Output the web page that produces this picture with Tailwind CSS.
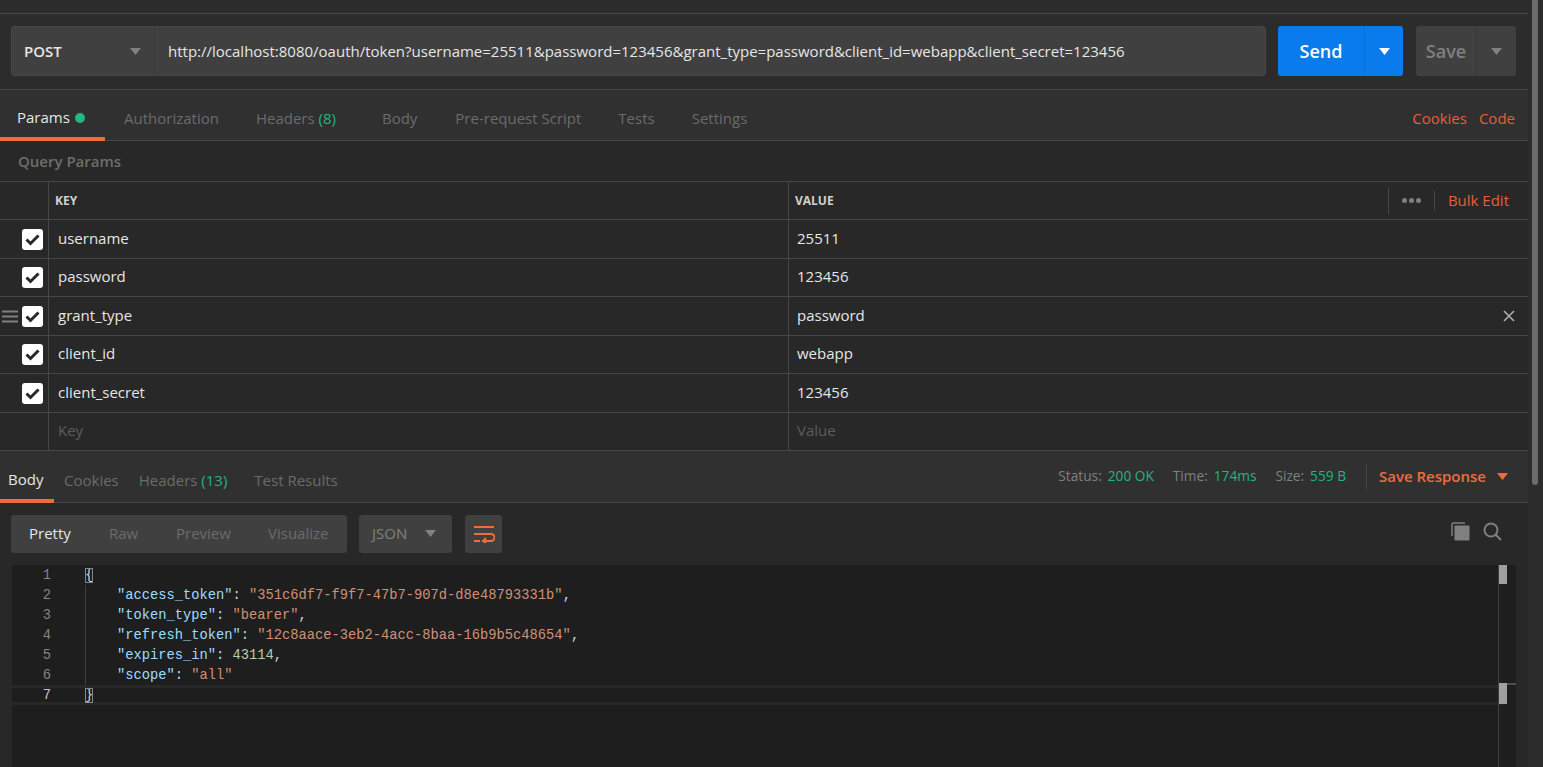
<!DOCTYPE html>
<html lang="en">
  <head>
    <meta charset="UTF-8" />
    <title>Postman</title>
    <script src="https://cdn.jsdelivr.net/npm/@tailwindcss/browser@4"></script>
  </head>
  <body class="bg-[#282828] font-['Open_Sans',sans-serif] overflow-hidden">
    <div class="flex h-[767px] w-[1543px]">
      <div class="w-[1528px] flex flex-col">
        <!-- top strip -->
        <div class="h-[14px] bg-[#2c2c2c] border-b border-[#464646]"></div>

        <!-- request bar -->
        <div class="h-[76px] bg-[#2c2c2c] border-b border-[#464646] flex items-start pt-[12px] pl-[11px]">
          <div class="flex w-[1255px] h-[50px] bg-[#404040] rounded-[3px] border border-[#464646]">
            <div class="w-[143px] flex items-center justify-between pl-[12px] pr-[13px] border-r border-[#3a3a3a] text-[15px] font-semibold text-[#e6e6e6]">
              <span>POST</span>
              <svg width="11" height="7" viewBox="0 0 11 7"><path d="M0 0h11L5.500 7z" fill="#808080"/></svg>
            </div>
            <div class="flex-1 flex items-center pl-[13px] text-[15px] text-[#e6e6e6] whitespace-nowrap">http://localhost:8080/oauth/token?username=25511&amp;password=123456&amp;grant_type=password&amp;client_id=webapp&amp;client_secret=123456</div>
          </div>
          <div class="ml-[12px] flex w-[125px] h-[50px] bg-[#097bed] rounded-[3px] text-white">
            <div class="w-[87px] flex items-center justify-center border-r border-[#0a6fd3] text-[18px] font-semibold">Send</div>
            <div class="flex-1 flex items-center justify-center">
              <svg width="11" height="7" viewBox="0 0 11 7"><path d="M0 0h11L5.500 7z" fill="#ffffff"/></svg>
            </div>
          </div>
          <div class="ml-[13px] flex w-[100px] h-[50px] bg-[#404040] rounded-[3px]">
            <div class="w-[61px] flex items-center justify-center border-r border-[#383838] text-[18px] font-semibold text-[#808080]">Save</div>
            <div class="flex-1 flex items-center justify-center">
              <svg width="11" height="7" viewBox="0 0 11 7"><path d="M0 0h11L5.500 7z" fill="#808080"/></svg>
            </div>
          </div>
        </div>

        <!-- request tabs -->
        <div class="h-[51px] bg-[#303030] border-b border-[#464646] flex items-stretch text-[15px] text-[#6b6b6b]">
          <div class="w-[105px] pl-[17px] flex items-center gap-[5px] text-[#e6e6e6] border-b-[4px] border-[#f26b3a] mb-[-1px]">
            <span class="mt-[8px]">Params</span><span class="w-[10px] h-[10px] rounded-full bg-[#26b47f] mt-[8px]"></span>
          </div>
          <div class="flex items-center gap-[37px] pl-[19px] pt-[7px]">
            <span>Authorization</span>
            <span>Headers <span class="text-[#26b47f]">(8)</span></span>
            <span class="ml-[9px]">Body</span>
            <span class="ml-[1px]">Pre-request Script</span>
            <span>Tests</span>
            <span>Settings</span>
          </div>
          <div class="ml-auto flex items-center gap-[12px] pr-[13px] pt-[7px] text-[#e0613a]">
            <span>Cookies</span><span>Code</span>
          </div>
        </div>

        <!-- query params -->
        <div class="h-[41px] border-b border-[#464646] flex items-center pl-[18px] text-[15px] font-semibold text-[#6e6e6e]">Query Params</div>

        <!-- table header -->
        <div class="grid grid-cols-[49px_740px_1fr] h-[38px] border-b border-[#464646] text-[12px] font-bold text-[#d0d0d0]">
          <div class="border-r border-[#464646]"></div>
          <div class="border-r border-[#464646] flex items-center pl-[6px]">KEY</div>
          <div class="flex items-center pl-[6px]">
            <span>VALUE</span>
            <div class="ml-auto flex items-center h-full font-normal">
              <div class="w-[1px] h-[27px] bg-[#464646]"></div>
              <div class="w-[45px] flex justify-center gap-[2px]">
                <span class="w-[5px] h-[5px] rounded-full bg-[#808080]"></span>
                <span class="w-[5px] h-[5px] rounded-full bg-[#808080]"></span>
                <span class="w-[5px] h-[5px] rounded-full bg-[#808080]"></span>
              </div>
              <div class="w-[1px] h-[20px] bg-[#464646]"></div>
              <span class="pl-[13px] pr-[19px] text-[15px] text-[#e0613a]">Bulk Edit</span>
            </div>
          </div>
        </div>

        <!-- rows -->
        <div class="grid grid-cols-[49px_740px_1fr] h-[39px] border-b border-[#464646] text-[15px] text-[#e6e6e6]">
          <div class="border-r border-[#464646] flex items-center pl-[22px]"><svg width="21" height="21" viewBox="0 0 21 21"><rect width="21" height="21" rx="3" fill="#fff"/><path d="M4.500 10.500l4 4 8-8" fill="none" stroke="#282828" stroke-width="3"/></svg></div>
          <div class="border-r border-[#464646] flex items-center pl-[9px] pb-[2px]">username</div>
          <div class="flex items-center pl-[8px] pb-[2px]">25511</div>
        </div>
        <div class="grid grid-cols-[49px_740px_1fr] h-[38px] border-b border-[#464646] text-[15px] text-[#e6e6e6]">
          <div class="border-r border-[#464646] flex items-center pl-[22px]"><svg width="21" height="21" viewBox="0 0 21 21"><rect width="21" height="21" rx="3" fill="#fff"/><path d="M4.500 10.500l4 4 8-8" fill="none" stroke="#282828" stroke-width="3"/></svg></div>
          <div class="border-r border-[#464646] flex items-center pl-[9px] pb-[2px]">password</div>
          <div class="flex items-center pl-[8px] pb-[2px]">123456</div>
        </div>
        <div class="grid grid-cols-[49px_740px_1fr] h-[39px] border-b border-[#464646] text-[15px] text-[#e6e6e6]">
          <div class="border-r border-[#464646] flex items-center pl-[2px] gap-[4px]">
            <svg width="16" height="13" viewBox="0 0 16 13"><path d="M0 1.500h16M0 6.500h16M0 11.500h16" stroke="#808080" stroke-width="2"/></svg>
            <svg width="21" height="21" viewBox="0 0 21 21"><rect width="21" height="21" rx="3" fill="#fff"/><path d="M4.500 10.500l4 4 8-8" fill="none" stroke="#282828" stroke-width="3"/></svg>
          </div>
          <div class="border-r border-[#464646] flex items-center pl-[9px] pb-[2px]">grant_type</div>
          <div class="flex items-center pl-[8px] pr-[13px] justify-between">
            <span class="mb-[2px]">password</span>
            <svg width="12" height="12" viewBox="0 0 12 12"><path d="M1 1l10 10M11 1L1 11" stroke="#b0b0b0" stroke-width="1.500"/></svg>
          </div>
        </div>
        <div class="grid grid-cols-[49px_740px_1fr] h-[38px] border-b border-[#464646] text-[15px] text-[#e6e6e6]">
          <div class="border-r border-[#464646] flex items-center pl-[22px]"><svg width="21" height="21" viewBox="0 0 21 21"><rect width="21" height="21" rx="3" fill="#fff"/><path d="M4.500 10.500l4 4 8-8" fill="none" stroke="#282828" stroke-width="3"/></svg></div>
          <div class="border-r border-[#464646] flex items-center pl-[9px] pb-[2px]">client_id</div>
          <div class="flex items-center pl-[8px] pb-[2px]">webapp</div>
        </div>
        <div class="grid grid-cols-[49px_740px_1fr] h-[39px] border-b border-[#464646] text-[15px] text-[#e6e6e6]">
          <div class="border-r border-[#464646] flex items-center pl-[22px]"><svg width="21" height="21" viewBox="0 0 21 21"><rect width="21" height="21" rx="3" fill="#fff"/><path d="M4.500 10.500l4 4 8-8" fill="none" stroke="#282828" stroke-width="3"/></svg></div>
          <div class="border-r border-[#464646] flex items-center pl-[9px] pb-[2px]">client_secret</div>
          <div class="flex items-center pl-[8px] pb-[2px]">123456</div>
        </div>
        <div class="grid grid-cols-[49px_740px_1fr] h-[38px] border-b border-[#464646] text-[15px] text-[#5c5c5c]">
          <div class="border-r border-[#464646]"></div>
          <div class="border-r border-[#464646] flex items-center pl-[9px] pb-[2px]">Key</div>
          <div class="flex items-center pl-[8px] pb-[2px]">Value</div>
        </div>

        <!-- response tabs -->
        <div class="h-[52px] bg-[#303030] border-b border-[#464646] flex items-stretch text-[15px] text-[#6b6b6b]">
          <div class="w-[54px] pl-[8px] flex items-center text-[#e6e6e6] border-b-[4px] border-[#f26b3a] mb-[-1px]"><span class="mt-[9px]">Body</span></div>
          <div class="flex items-center pl-[10px] gap-[20px] pt-[7px]">
            <span>Cookies</span>
            <span>Headers <span class="text-[#26b47f]">(13)</span></span>
            <span class="ml-[7px]">Test Results</span>
          </div>
          <div class="ml-auto flex items-center pr-[20px] text-[#808080]">
            <span class="text-[13.700px]">Status:</span><span class="ml-[6px] text-[13.700px] text-[#26b47f]">200 OK</span>
            <span class="ml-[19px] text-[13.700px]">Time:</span><span class="ml-[6px] text-[13.700px] text-[#26b47f]">174ms</span>
            <span class="ml-[19px] text-[13.700px]">Size:</span><span class="ml-[6px] text-[13.700px] text-[#26b47f]">559 B</span>
            <div class="ml-[20px] w-[1px] h-[25px] bg-[#464646]"></div>
            <span class="ml-[12px] font-semibold text-[#f26b3a]">Save Response</span>
            <svg class="ml-[11px]" width="11" height="7" viewBox="0 0 11 7"><path d="M0 0h11L5.500 7z" fill="#f26b3a"/></svg>
          </div>
        </div>

        <!-- response toolbar -->
        <div class="h-[62px] flex items-center pl-[11px] pr-[26px] text-[15px] pb-[1px]">
          <div class="flex items-center w-[336px] h-[38px] bg-[#404040] rounded-[3px] text-[#6b6b6b]">
            <span class="w-[80px] pl-[18px] text-[#e6e6e6]">Pretty</span>
            <span class="w-[67px] pl-[18px]">Raw</span>
            <span class="w-[92px] pl-[18px]">Preview</span>
            <span class="pl-[18px]">Visualize</span>
          </div>
          <div class="ml-[12px] flex items-center justify-between w-[93px] h-[38px] bg-[#404040] rounded-[3px] pl-[13px] pr-[16px] text-[#808080]">
            <span>JSON</span>
            <svg width="11" height="7" viewBox="0 0 11 7"><path d="M0 0h11L5.500 7z" fill="#808080"/></svg>
          </div>
          <div class="ml-[13px] flex items-center justify-center w-[37px] h-[38px] bg-[#404040] rounded-[3px]">
            <svg width="22" height="18" viewBox="0 0 22 18" fill="none" stroke="#f26b3a" stroke-width="2"><path d="M1 2h20M1 9h17a3 3 0 0 1 0 7h-7M13 13l-3 3 3 2M1 16h6"/></svg>
          </div>
          <div class="ml-auto flex items-center gap-[13px] mb-[4px]">
            <svg width="19" height="19" viewBox="0 0 19 19"><path d="M1 14V2.500A1.500 1.500 0 0 1 2.500 1H14" fill="none" stroke="#808080" stroke-width="1.500"/><rect x="3.500" y="3.500" width="15" height="15" rx="1" fill="#808080"/></svg>
            <svg width="19" height="19" viewBox="0 0 19 19" fill="none" stroke="#808080" stroke-width="2"><circle cx="8" cy="8" r="6.500"/><path d="M12.500 12.500L18 18"/></svg>
          </div>
        </div>

        <!-- response editor -->
        <div class="relative flex-1 ml-[12px] mr-[12px] bg-[#1e1e1e] font-['Liberation_Mono',monospace] text-[13.750px] leading-[20px] overflow-hidden">
          <div class="absolute left-0 right-[12px] top-[120px] h-[20px] border-y-[3px] border-[#282828]"></div>
          <div class="absolute left-[73px] top-[20px] h-[100px] w-[1px] bg-[#404040]"></div>
          <div class="relative flex pt-[1px]">
            <div class="w-[39px] text-right text-[#858585]">
              <div>1</div><div>2</div><div>3</div><div>4</div><div>5</div><div>6</div><div class="text-[#c6c6c6]">7</div>
            </div>
            <div class="ml-[34px] text-[#d4d4d4]">
              <div><span class="outline outline-[#888] -outline-offset-1">{</span></div>
              <div class="whitespace-pre -ml-[1px]">    <span class="text-[#9cdcfe]">"access_token"</span>: <span class="text-[#ce9178]">"351c6df7-f9f7-47b7-907d-d8e48793331b"</span>,</div>
              <div class="whitespace-pre -ml-[1px]">    <span class="text-[#9cdcfe]">"token_type"</span>: <span class="text-[#ce9178]">"bearer"</span>,</div>
              <div class="whitespace-pre -ml-[1px]">    <span class="text-[#9cdcfe]">"refresh_token"</span>: <span class="text-[#ce9178]">"12c8aace-3eb2-4acc-8baa-16b9b5c48654"</span>,</div>
              <div class="whitespace-pre -ml-[1px]">    <span class="text-[#9cdcfe]">"expires_in"</span>: <span class="text-[#b5cea8]">43114</span>,</div>
              <div class="whitespace-pre -ml-[1px]">    <span class="text-[#9cdcfe]">"scope"</span>: <span class="text-[#ce9178]">"all"</span></div>
              <div><span class="outline outline-[#888] -outline-offset-1">}</span></div>
            </div>
          </div>
          <!-- overview ruler -->
          <div class="absolute top-0 bottom-0 right-[17px] w-[1px] bg-[#404040]"></div>
          <div class="absolute top-0 right-[9px] w-[8px] h-[19px] bg-[#a0a0a0]"></div>
          <div class="absolute top-[118px] right-0 w-[17px] h-[2px] bg-[#505050]"></div>
          <div class="absolute top-[118px] right-[9px] w-[8px] h-[21px] bg-[#a0a0a0]"></div>
        </div>
      </div>

      <!-- window scrollbar -->
      <div class="relative w-[15px] bg-[#2c2c2c]">
        <div class="absolute left-[4px] top-0 w-[6px] h-[485px] bg-[#6b6b6b] rounded-b-[3px]"></div>
      </div>
    </div>
  </body>
</html>
